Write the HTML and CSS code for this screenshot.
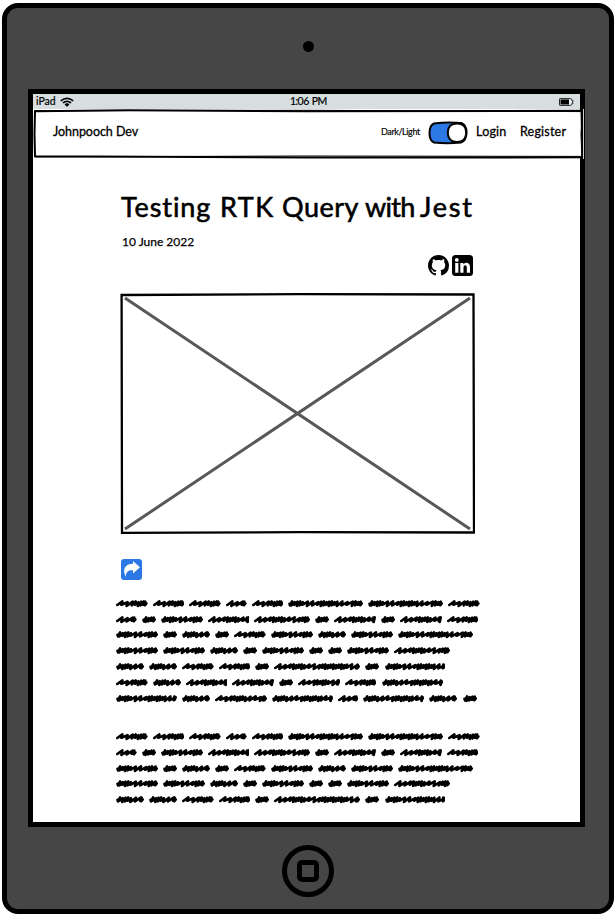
FILE: index.html
```html
<!DOCTYPE html>
<html lang="en">
<head>
<meta charset="utf-8">
<title>Johnpooch Dev</title>
<link rel="stylesheet" href="styles.css">
</head>
<body>
<div class="tablet">
  <div class="camera"></div>
  <div class="screen">
    <div class="status">
      <div class="carrier"><span class="ipad">iPad</span>
        <svg class="wifi" viewBox="0 0 14 10"><g fill="none" stroke="#000" stroke-width="1.700"><path d="M.8 3.900Q7-1 13.200 3.900M2.900 5.900q4.100-3.200 8.200 0M5 7.700q2-1.400 4 0"/></g><path d="M5 7.400 7 10l2-2.600z"/></svg>
      </div>
      <span class="clock">1:06 PM</span>
      <svg class="battery" viewBox="0 0 15 8"><path d="M1 .6h10.600q.9 0 .9 1v.6h1.300v3.600h-1.300v.6q0 1-.9 1H1q-.5 0-.5-.6V1.200Q.5.6 1 .6z" fill="#e8edee" stroke="#222" stroke-width="1"/><path d="M1.500 1.500h8.500v5H1.500z"/></svg>
    </div>
    <header class="nav">
      <svg class="nav-frame" viewBox="0 0 551 50"><path d="M2 2.200 95 1.300 273 2.200 548.500 1.800 549.500 48.300 274 48.600 2 47.200 1.500 25z" fill="#fff" stroke="#000" stroke-width="2"/><path d="M1.500 1.700 280 1.300 549.500 2.600 548 25 548.800 47.400 270 47 2.300 48" fill="none" stroke="#000" stroke-width="1"/><path d="M550.500 0v50" stroke="#fff" stroke-width=".8"/></svg>
      <span class="brand">Johnpooch Dev</span>
      <span class="mode">Dark/Light</span>
      <svg class="toggle" viewBox="0 0 40 24"><path d="M6 2.500Q19 .7 33 2q5.500 1.500 5.500 9.500T33 21.500q-14 1.500-27 0Q1.500 19.500 1.500 12T6 2.500z" fill="#2c79e6" stroke="#000" stroke-width="2"/><path d="M29 2.500c6 0 9.200 3.500 9.200 9.200s-3.200 9.200-9.200 9.200-9.200-3.500-9.200-9.200 3.200-9.200 9.200-9.200z" fill="#fff" stroke="#000" stroke-width="2"/></svg>
      <a class="login">Login</a>
      <a class="register">Register</a>
    </header>
    <article class="post">
      <h1><span class="w1">Testing</span><span class="w2">RTK</span><span class="w3">Query</span><span class="w4">with</span><span class="w5">Jest</span></h1>
      <div class="date">10 June 2022</div>
      <div class="social">
        <svg viewBox="0 0 16 16"><path d="M8 0C3.580 0 0 3.580 0 8c0 3.540 2.290 6.530 5.470 7.590.4.070.55-.17.55-.38 0-.19-.01-.82-.01-1.490-2.010.37-2.530-.49-2.690-.94-.09-.23-.48-.94-.82-1.130-.28-.15-.68-.52-.01-.53.63-.01 1.080.58 1.230.82.72 1.210 1.870.87 2.330.66.07-.52.28-.87.51-1.070-1.780-.2-3.640-.89-3.640-3.950 0-.87.31-1.590.82-2.150-.08-.2-.36-1.020.08-2.120 0 0 .67-.21 2.200.82.64-.18 1.320-.27 2-.27s1.360.09 2 .27c1.530-1.040 2.200-.82 2.200-.82.44 1.100.16 1.920.08 2.120.51.56.82 1.270.82 2.150 0 3.070-1.870 3.750-3.650 3.950.29.25.54.73.54 1.480 0 1.070-.01 1.930-.01 2.200 0 .21.15.46.55.38A8.010 8.010 0 0 0 16 8c0-4.420-3.580-8-8-8z"/></svg>
        <svg viewBox="0 0 21 21"><rect width="21" height="21" rx="3.500"/><g fill="#fff"><circle cx="4.800" cy="4.900" r="1.900"/><path d="M3.200 8h3.200v9.800H3.200zM8.300 8h3.100v1.400c1.800-2.700 6.600-2 6.600 2.500v5.900h-3.200v-5.200c0-3.200-3.300-2.900-3.300 0v5.200H8.300z"/></g></svg>
      </div>
      <svg class="image" viewBox="0 0 355 241"><path d="M5 5 350 236M350 5 5 236" stroke="#585858" stroke-width="3"/><path d="M1.600 2 180 1.200 353.500 1.500 354 239.500 180 239.200 2 239.800z" fill="none" stroke="#000" stroke-width="2.300"/></svg>
      <svg class="share" viewBox="0 0 21 21"><rect width="21" height="21" rx="3" fill="#2c79e6"/><path d="M5 18C.8 10.500 4 4.800 12 4.800V1.900L19 8.300 12 14.500v-3.300c-4-.4-7.500 1.300-7 6.800z" fill="#fff"/></svg>
      <div class="copy" data-rows="7"></div>
      <div class="copy" data-rows="5"></div>
    </article>
  </div>
  <div class="home"><div class="home-mark"></div></div>
</div>
<script src="script.js"></script>
</body>
</html>
```
FILE: styles.css
```css
* { box-sizing: border-box; }
body { margin: 0; background: #fff; color: #000; font-family: Lato, "Liberation Sans", sans-serif; font-variant-ligatures: none; }
.tablet {
  width: 612px; height: 911px; margin: 3px 0 0 2px;
  border: 5px solid #000; border-radius: 16px; background: #464646;
  display: flex; flex-direction: column; align-items: center;
}
.camera { width: 11px; height: 11px; margin-top: 32.500px; margin-bottom: -.5px; border-radius: 50%; background: #000; flex: none; }
.screen {
  width: 557px; height: 738px; margin: 38px 3px 0 0; flex: none;
  border: 5px solid #000; background: #fff;
}
.status {
  height: 15px; padding: 0 6px 0 3px; background: #d6dee0;
  display: grid; grid-template-columns: 254px 1fr auto; align-items: center;
  font-size: 10.500px; line-height: 15px; -webkit-text-stroke: .2px #000;
}
.clock { letter-spacing: -.550px; word-spacing: 1px; }
.carrier { display: flex; align-items: center; gap: 4px; }
.wifi { width: 14px; height: 10px; margin-top: 1px; }
.battery { width: 15px; height: 8px; margin-top: 1px; }
.nav {
  position: relative; height: 49px; padding-left: 20px;
  display: flex; align-items: center; font-size: 12.500px; -webkit-text-stroke: .3px #000;
}
.nav > * { z-index: 1; flex: none; }
.nav .nav-frame { position: absolute; left: 0; top: 0; z-index: 0; width: 551px; height: 50px; }
.nav span, .nav a { line-height: 16px; margin-top: -3px; }
.brand { width: 328px; letter-spacing: -.050px; }
.nav .mode { width: 47px; font-size: 9px; letter-spacing: -.4px; white-space: nowrap; -webkit-text-stroke: .15px #000; }
.toggle { width: 40px; height: 24px; margin-top: -2px; }
.login { width: 44px; margin-left: 8px; }
.login, .register { letter-spacing: .2px; }
.post { margin-left: 88px; width: 355px; }
h1 {
  display: grid; grid-template-columns: 99px 62px 83px 55px 56px; height: 36px; margin: 31px 0 0 0;
  font-size: 27px; line-height: 36px; font-weight: 400; -webkit-text-stroke: .6px #000;
}
h1 span { white-space: nowrap; }
.w1 { letter-spacing: .9px; }
.w2 { letter-spacing: 1.500px; }
.w3 { letter-spacing: .5px; }
.w4 { letter-spacing: -.7px; }
.w5 { letter-spacing: 1.800px; }
.date { margin-top: 9px; padding-left: 1px; height: 16px; font-size: 12px; line-height: 16px; -webkit-text-stroke: .25px #000; }
.social { display: flex; justify-content: flex-end; gap: 3px; margin-top: 5px; padding-right: 3px; }
.social svg { width: 21px; height: 21px; }
.image { display: block; width: 355px; height: 241px; margin-top: 17px; margin-left: -1px; }
.share { display: block; width: 21px; height: 21px; margin: 25px 0 0; }
.copy { margin: 15.300px 0 0 -5px; width: 370px; }
.copy + .copy { margin-top: 22.200px; }
.row { display: flex; gap: 5.050px; height: 15.850px; align-items: center; }
.row svg { height: 9px; flex: none; }
.row path { fill: none; stroke: #000; stroke-width: 2.600; stroke-linejoin: round; stroke-linecap: round; }
.home {
  width: 52px; height: 52px; margin-top: 18px; flex: none;
  border: 5px solid #000; border-radius: 50%; display: flex; align-items: center; justify-content: center;
}
.home-mark { width: 22px; height: 22px; border: 5px solid #000; border-radius: 5px; }
```
FILE: script.js
```js
// Scribbled words: each row lists word widths; "r" marks words opening with loose strokes.
const rows = [
  "r31.6 r31.6 r31.6 r20.6 r31.6 d75 d75 r31.6",
  "r20.6 d14 d42 r41.4 r56 d14 r41.6 d14 r41.6 r31.6",
  "d42 d14 d28 d14 r31.6 d42 d28 d42 d75",
  "d42 d42 d28 d14 d42 d14 d14 d42 r56",
  "d28 d28 r31.6 r31.6 d14 r86 d14 d60.6",
  "r31.6 d28 r41.5 r41.5 d14 r42 r31.6 d61",
  "d60.6 d28 r52 d61 r20.6 d61 d28 d14"
];
function scribble(code) {
  const width = parseFloat(code.slice(1));
  const loose = code[0] === "r";
  let x = 1.5, i = 0, d = loose ? "M1.3 6" : "M1.5 4.8L2 6.4";
  while (x < width - 5) {
    const wide = loose ? (x < 14 || (x % 43) > 29) : (x > 13 && (x % 33) > 14 && (x % 33) < 27);
    const step = wide ? 5.2 : 2.7;
    const top = [2.4, 3.2, 2.7][i % 3];
    const bottom = [6.4, 5.8, 6.9][(i + width) % 3 | 0];
    d += `L${(x + step * .95).toFixed(1)} ${top}L${(x + step * .75).toFixed(1)} ${bottom}`;
    x += step;
    i++;
  }
  d += `L${width - 2.3} 2.6L${width - 2.8} 6.3L${width - 1.2} 4.4`;
  return `<svg width="${width}" height="9" viewBox="0 0 ${width} 9"><path d="${d}"/></svg>`;
}
document.querySelectorAll(".copy").forEach(block => {
  block.innerHTML = rows.slice(0, +block.dataset.rows)
    .map(r => `<div class="row">${r.split(" ").map(scribble).join("")}</div>`).join("");
});
```
